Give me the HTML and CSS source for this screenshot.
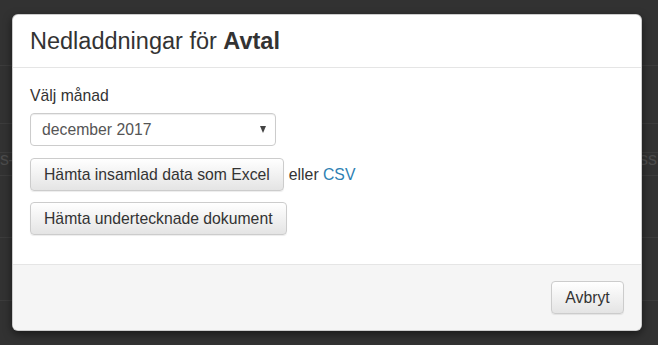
FILE: index.html
```html
<!DOCTYPE html>
<html lang="sv">
<head>
    <meta charset="UTF-8">
    <meta name="viewport" content="width=device-width, initial-scale=1.0">
    <title>Nedladdningar</title>
    <link rel="stylesheet" href="styles.css">
</head>
<body>
    <div class="page">
        <div class="page-row r1"></div>
        <div class="page-row r2"></div>
        <div class="page-row r3"></div>
        <div class="page-row r4"><span class="left-text">s–</span><span class="right-text">Process</span></div>
        <div class="page-row r5"></div>
        <div class="page-row r6"></div>
        <div class="page-row r7"></div>
    </div>

    <div class="modal">
        <div class="modal-header">
            <h4 class="modal-title">Nedladdningar för <strong>Avtal</strong></h4>
        </div>
        <div class="modal-body">
            <label class="field-label">Välj månad</label>
            <div class="select">
                <span>december 2017</span>
                <span class="caret"></span>
            </div>
            <div class="action-row">
                <button class="btn">Hämta insamlad data som Excel</button>
                <span class="alt">eller <a href="#">CSV</a></span>
            </div>
            <div class="action-row">
                <button class="btn">Hämta undertecknade dokument</button>
            </div>
        </div>
        <div class="modal-footer">
            <button class="btn">Avbryt</button>
        </div>
    </div>
</body>
</html>
```

FILE: styles.css
```css
* {
    box-sizing: border-box;
}
body {
    margin: 0;
    background: #323232;
    font-family: "Liberation Sans", Arial, sans-serif;
    font-size: 15.75px;
    color: #333;
    overflow: hidden;
}
.page {
    height: 345px;
}
.page-row {
    border-bottom: 1px solid #3c3c3c;
    position: relative;
}
.r1 { height: 66px; }
.r2 { height: 58px; }
.r3 { height: 29px; }
.r4 { height: 23px; }
.r5 { height: 62px; }
.r6 { height: 63px; }
.r7 { height: 44px; border-bottom: none; }
.left-text,
.right-text {
    position: absolute;
    top: -4px;
    color: #4c4c4c;
    font-size: 18px;
}
.left-text { left: 0; }
.right-text { right: 1px; }

.modal {
    position: absolute;
    left: 12px;
    top: 14px;
    width: 630px;
    height: 317px;
    background: #fff;
    border: 1px solid rgba(0, 0, 0, 0.2);
    border-radius: 6px;
    box-shadow: 0 3px 9px rgba(0, 0, 0, 0.5);
    display: flex;
    flex-direction: column;
    overflow: hidden;
}
.modal-header {
    height: 53px;
    padding: 0 17px;
    border-bottom: 1px solid #e5e5e5;
    display: flex;
    align-items: center;
}
.modal-title {
    margin: 0;
    font-size: 23.5px;
    font-weight: normal;
    line-height: 26px;
    color: #333;
}
.modal-title strong {
    font-weight: bold;
}
.modal-body {
    flex: 1;
    padding: 17px 17px 0;
}
.field-label {
    display: block;
    line-height: 22.5px;
    margin-bottom: 5.5px;
}
.select {
    width: 246px;
    height: 33px;
    border: 1px solid #ccc;
    border-radius: 4px;
    padding: 0 9px 0 11px;
    display: flex;
    align-items: center;
    justify-content: space-between;
    color: #555;
    box-shadow: inset 0 1px 1px rgba(0, 0, 0, 0.075);
}
.caret {
    width: 0;
    height: 0;
    border-left: 3.5px solid transparent;
    border-right: 3.5px solid transparent;
    border-top: 7px solid #444;
}
.action-row {
    display: flex;
    align-items: center;
    gap: 5px;
    margin-top: 12px;
}
.action-row + .action-row {
    margin-top: 11px;
}
.btn {
    font-family: inherit;
    font-size: 15.75px;
    color: #333;
    height: 33px;
    padding: 0 13px;
    border: 1px solid #ccc;
    border-radius: 4px;
    background: linear-gradient(to bottom, #fff 0, #e4e4e4 100%);
    box-shadow: inset 0 1px 0 rgba(255, 255, 255, 0.15), 0 1px 1px rgba(0, 0, 0, 0.075);
    cursor: pointer;
}
.alt a {
    color: #2e7fb3;
    text-decoration: none;
}
.modal-footer {
    height: 66px;
    background: #f5f5f5;
    border-top: 1px solid #e5e5e5;
    padding: 16px 17px 0;
    display: flex;
    justify-content: flex-end;
    align-items: flex-start;
}
.modal-footer .btn {
    width: 73px;
    padding: 0;
}
```
